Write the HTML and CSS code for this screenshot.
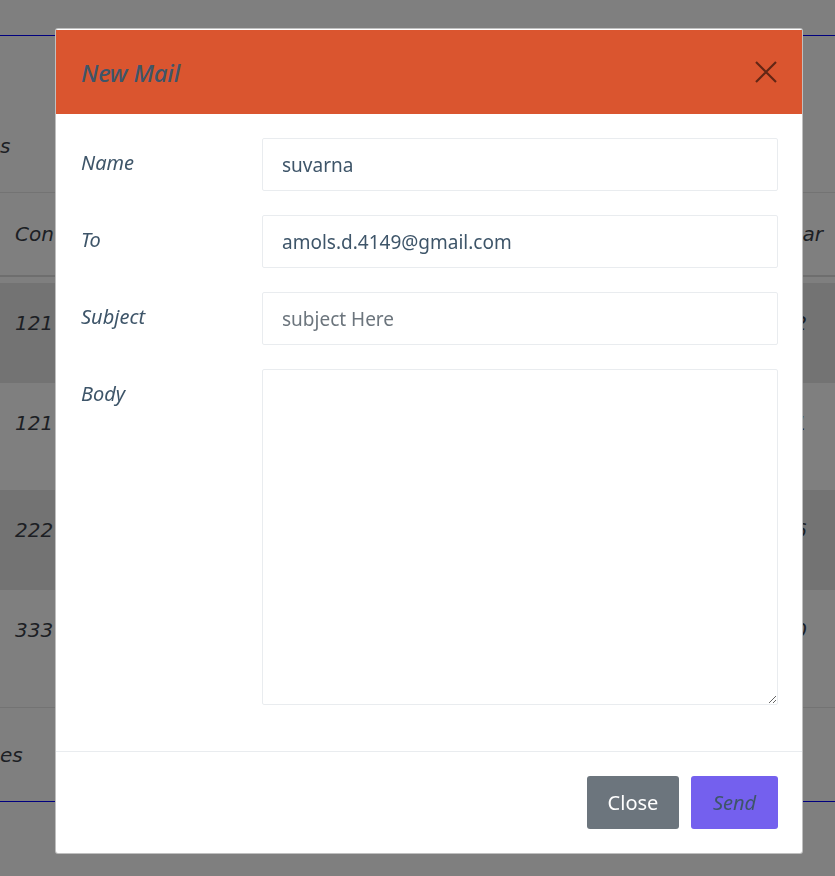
FILE: index.html
```html
<!DOCTYPE html>
<html lang="en">
<head>
<meta charset="utf-8">
<title>New Mail</title>
<link rel="stylesheet" href="styles.css">
</head>
<body>
<div class="page">
  <div class="card">
    <div class="card-head"><span class="card-title">s</span></div>
    <div class="table">
      <div class="trow thead"><span class="cell-l">Con</span><span class="cell-r year">Year</span></div>
      <div class="trow striped r1"><span class="cell-l">121</span><span class="cell-r">2</span></div>
      <div class="trow r2"><span class="cell-l">121</span><span class="cell-r">1</span></div>
      <div class="trow striped r3"><span class="cell-l">222</span><span class="cell-r">6</span></div>
      <div class="trow r4"><span class="cell-l">333</span><span class="cell-r">0</span></div>
    </div>
    <div class="card-foot"><span class="foot-text">es</span></div>
  </div>
</div>

<div class="overlay">
  <div class="modal">
    <div class="modal-header">
      <h5 class="modal-title">New Mail</h5>
      <button class="close-btn" type="button" aria-label="Close">
        <svg width="24" height="24" viewBox="0 0 24 24"><path d="M2 2 L22 22 M22 2 L2 22" stroke="rgba(0,0,0,0.55)" stroke-width="2.2" fill="none"/></svg>
      </button>
    </div>
    <div class="modal-body">
      <div class="form-row"><label class="lbl">Name</label><input class="field" type="text" value="suvarna"></div>
      <div class="form-row"><label class="lbl">To</label><input class="field" type="text" value="amols.d.4149@gmail.com"></div>
      <div class="form-row"><label class="lbl">Subject</label><input class="field" type="text" placeholder="subject Here"></div>
      <div class="form-row"><label class="lbl">Body</label><textarea class="field area"></textarea></div>
    </div>
    <div class="modal-footer">
      <button class="btn btn-close" type="button">Close</button>
      <button class="btn btn-send" type="button">Send</button>
    </div>
  </div>
</div>
</body>
</html>
```

FILE: styles.css
```css
html, body {
  margin: 0;
  padding: 0;
  background: #ffffff;
  overflow: hidden;
}
body {
  width: 835px;
  height: 876px;
  font-family: "DejaVu Sans", sans-serif;
  font-style: italic;
}
.page {
  padding-top: 35px;
}
.card {
  border-top: 1px solid #0000ff;
  border-bottom: 1px solid #0000ff;
  height: 765px;
  display: flex;
  flex-direction: column;
}
.card-head {
  height: 157px;
  border-bottom: 1px solid #e6e6e6;
  display: flex;
  align-items: flex-end;
  padding-bottom: 34px;
  box-sizing: border-box;
}
.card-title {
  font-size: 20px;
  color: #3a3f48;
}
.table {
  display: flex;
  flex-direction: column;
}
.trow {
  display: flex;
  justify-content: space-between;
  align-items: flex-start;
  font-size: 20px;
  color: #3a3f48;
}
.thead {
  height: 84px;
  border-bottom: 2px solid #dcdcdc;
  box-sizing: border-box;
  align-items: center;
  margin-bottom: 6px;
}
.cell-l { padding-left: 15px; }
.cell-r { padding-right: 28px; }
.cell-r.year { padding-right: 12px; }
.striped { background: #e6e6e6; }
.r1 { height: 100px; padding-top: 28px; box-sizing: border-box; }
.r2 { height: 107px; padding-top: 28px; box-sizing: border-box; }
.r3 { height: 100px; padding-top: 28px; box-sizing: border-box; }
.r4 { height: 118px; padding-top: 28px; box-sizing: border-box; border-bottom: 1px solid #e6e6e6; }
.card-foot {
  flex: 1;
  display: flex;
  align-items: center;
}
.foot-text {
  font-size: 20px;
  color: #3a3f48;
}

.overlay {
  position: fixed;
  inset: 0;
  background: rgba(0, 0, 0, 0.5);
  display: flex;
  align-items: flex-start;
  justify-content: flex-start;
  padding: 28px 0 0 55px;
}
.modal {
  width: 748px;
  height: 826px;
  box-sizing: border-box;
  background: #ffffff;
  border: 1px solid rgba(0, 0, 0, 0.25);
  border-radius: 3px;
  display: flex;
  flex-direction: column;
  font-family: "Noto Sans", "Open Sans", sans-serif;
  color: #3e5569;
}
.modal-header {
  margin-top: 1px;
  height: 84px;
  background: #da552f;
  display: flex;
  align-items: center;
  justify-content: space-between;
  padding: 0 24px 0 25px;
  flex-shrink: 0;
}
.modal-title {
  margin: 0;
  font-size: 24px;
  font-style: italic;
  font-weight: 500;
  color: #3e5569;
  letter-spacing: -0.2px;
}
.close-btn {
  border: 0;
  background: transparent;
  padding: 0;
  width: 24px;
  height: 24px;
  display: flex;
}
.modal-body {
  padding: 24px 24px 0 25px;
  display: flex;
  flex-direction: column;
  gap: 24px;
  flex: 1;
}
.form-row {
  display: grid;
  grid-template-columns: 181px 1fr;
  align-items: start;
}
.lbl {
  font-size: 20px;
  font-style: italic;
  line-height: 28px;
  padding-top: 11px;
  color: #3e5569;
}
.field {
  height: 53px;
  box-sizing: border-box;
  border: 1px solid #e9ecef;
  border-radius: 2px;
  padding: 0 19px;
  font-family: "Noto Sans", "Open Sans", sans-serif;
  font-size: 19px;
  color: #3e5569;
  outline: none;
  width: 100%;
}
.field::placeholder {
  color: #6c757d;
  opacity: 1;
}
.area {
  height: 336px;
  resize: vertical;
  padding: 12px 19px;
}
.modal-footer {
  border-top: 1px solid #e9ecef;
  height: 102px;
  box-sizing: border-box;
  display: flex;
  justify-content: flex-end;
  align-items: center;
  gap: 12px;
  padding: 0 24px;
  flex-shrink: 0;
}
.btn {
  height: 53px;
  border: 0;
  border-radius: 3px;
  font-family: "Noto Sans", "Open Sans", sans-serif;
  font-size: 20px;
  padding: 0 19px;
}
.btn-close {
  background: #6c757d;
  color: #ffffff;
  width: 92px;
}
.btn-send {
  background: #7460ee;
  color: #3e5569;
  font-style: italic;
  width: 87px;
}
```
